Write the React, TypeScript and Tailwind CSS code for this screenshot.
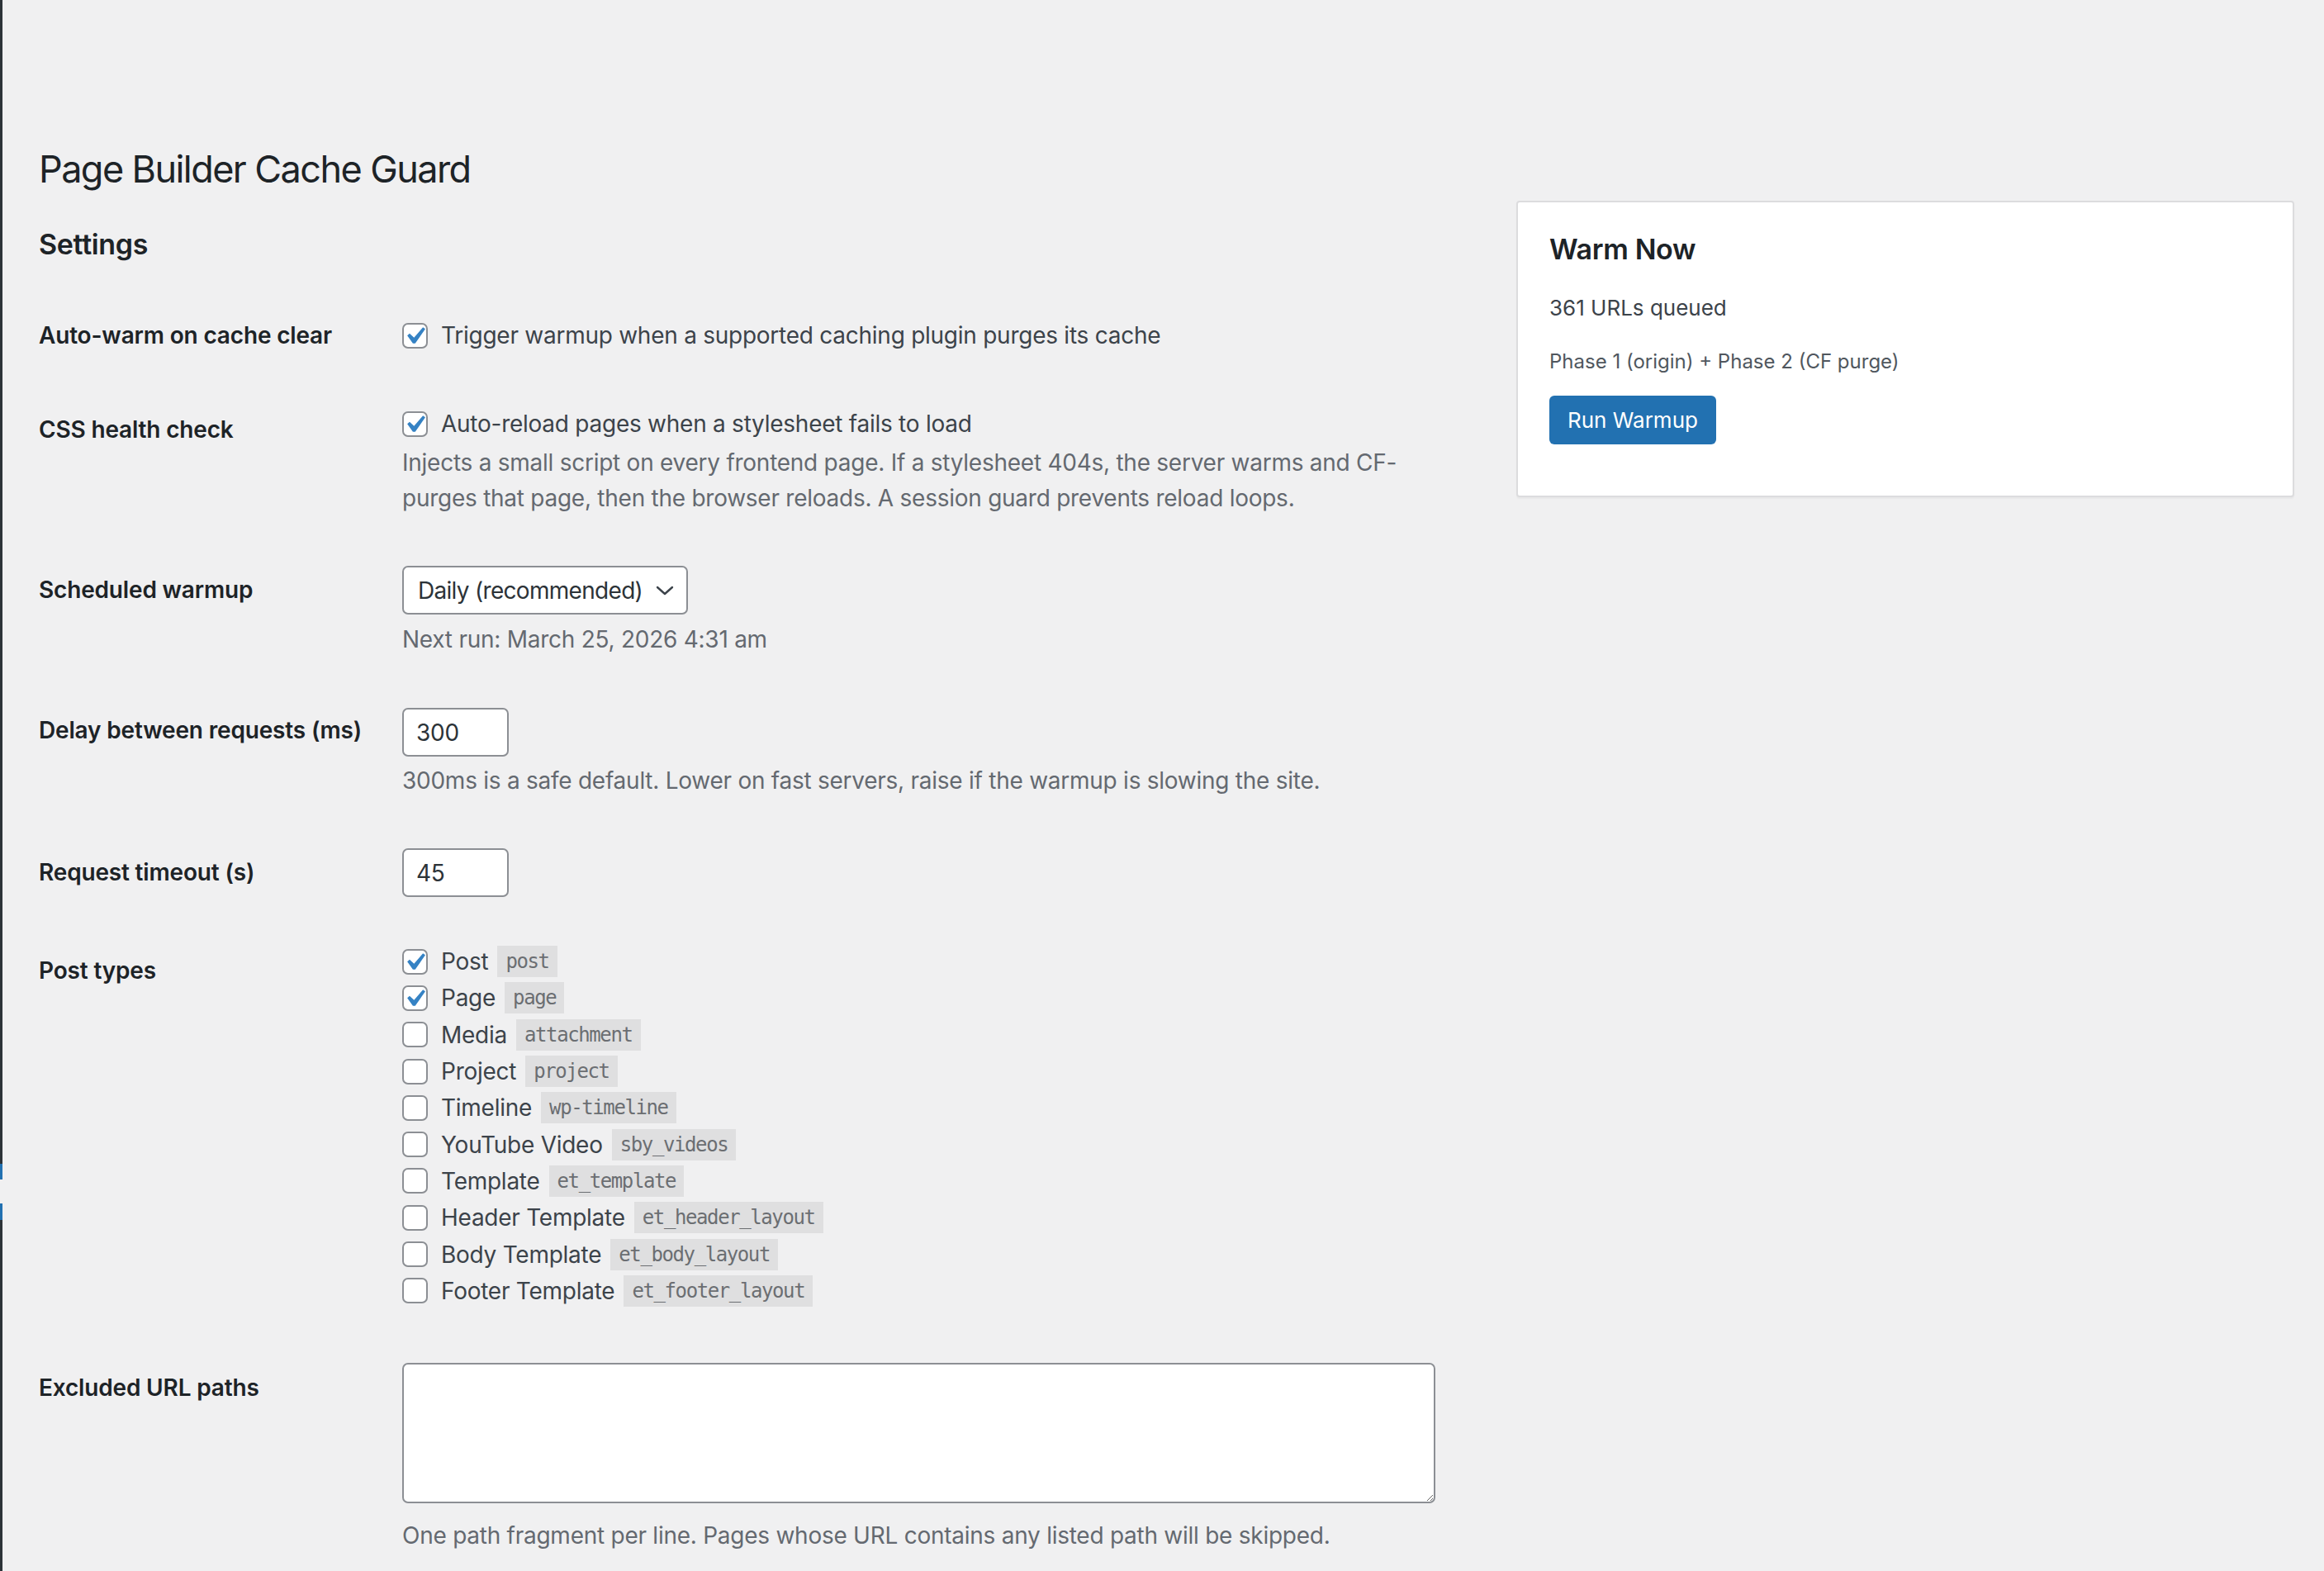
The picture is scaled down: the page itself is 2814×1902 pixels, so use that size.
import { useState } from 'react'

type PostType = {
  label: string
  slug: string
  checked: boolean
}

const postTypes: PostType[] = [
  { label: 'Post', slug: 'post', checked: true },
  { label: 'Page', slug: 'page', checked: true },
  { label: 'Media', slug: 'attachment', checked: false },
  { label: 'Project', slug: 'project', checked: false },
  { label: 'Timeline', slug: 'wp-timeline', checked: false },
  { label: 'YouTube Video', slug: 'sby_videos', checked: false },
  { label: 'Template', slug: 'et_template', checked: false },
  { label: 'Header Template', slug: 'et_header_layout', checked: false },
  { label: 'Body Template', slug: 'et_body_layout', checked: false },
  { label: 'Footer Template', slug: 'et_footer_layout', checked: false },
]

const sans = "font-['Inter','Liberation_Sans',sans-serif]"

function Checkbox({ checked }: { checked: boolean }) {
  return (
    <span className="relative inline-block h-[31px] w-[31px] shrink-0 rounded-[7px] border-2 border-[#8c8f94] bg-white">
      {checked && (
        <svg viewBox="0 0 20 20" className="absolute left-[-8px] top-[-7px] h-[42px] w-[42px]">
          <path d="M14.83 4.89l1.34.94-5.81 8.38H9.02L5.78 9.67l1.34-1.25 2.57 2.4z" fill="#3582c4" />
        </svg>
      )}
    </span>
  )
}

function Label({ children, top }: { children: React.ReactNode; top: number }) {
  return (
    <div style={{ paddingTop: top }} className="text-[28px] font-semibold leading-[36px] tracking-[-0.006em] text-[#1d2327]">
      {children}
    </div>
  )
}

export default function App() {
  const [types, setTypes] = useState(postTypes)
  const [delay, setDelay] = useState('300')
  const [timeout, setTimeoutVal] = useState('45')

  function toggle(i: number) {
    setTypes(types.map((t, j) => (j === i ? { ...t, checked: !t.checked } : t)))
  }

  return (
    <div className={`flex min-h-screen bg-[#f0f0f1] ${sans}`}>
      {/* admin menu edge */}
      <div className="flex w-[3px] shrink-0 flex-col bg-[#2c3338]">
        <div className="h-[1409px]" />
        <div className="h-[19px] bg-[#2271b1]" />
        <div className="h-[29px] bg-[#f0f0f1]" />
        <div className="h-[20px] bg-[#2271b1]" />
      </div>

      <div className="flex-1 pl-[44px] pt-[175px]">
        <h1 className="text-[45px] font-normal leading-[60px] tracking-[-0.035em] text-[#1d2327]">Page Builder Cache Guard</h1>

        <div className="mt-[8px] flex">
          <div className="w-[1789px] tracking-[-0.016em]">
            <h2 className="mt-[31px] mb-[32px] text-[34px] font-semibold leading-[44px] tracking-[-0.01em] text-[#1d2327]">Settings</h2>

            {/* Auto-warm */}
            <div className="grid grid-cols-[440px_1fr]">
              <Label top={38}>Auto-warm on cache clear</Label>
              <div className="pt-[35px] pb-[35px]">
                <label className="flex h-[42px] items-center gap-[16px] text-[28px] text-[#3c434a]">
                  <Checkbox checked />
                  Trigger warmup when a supported caching plugin purges its cache
                </label>
              </div>
            </div>

            {/* CSS health */}
            <div className="grid grid-cols-[440px_1fr]">
              <Label top={40}>CSS health check</Label>
              <div className="pt-[30px] pb-[30px]">
                <label className="flex h-[42px] items-center gap-[16px] text-[28px] text-[#3c434a]">
                  <Checkbox checked />
                  Auto-reload pages when a stylesheet fails to load
                </label>
                <p className="mt-[5px] text-[28px] leading-[43px] text-[#646970]">
                  Injects a small script on every frontend page. If a stylesheet 404s, the server warms and CF-
                  <br />
                  purges that page, then the browser reloads. A session guard prevents reload loops.
                </p>
              </div>
            </div>

            {/* Scheduled */}
            <div className="grid grid-cols-[440px_1fr]">
              <Label top={41}>Scheduled warmup</Label>
              <div className="pt-[30px] pb-[30px]">
                <div className="flex h-[59px] w-[346px] items-center justify-between rounded-[7px] border-2 border-[#8c8f94] bg-white pl-[17px] pr-[14px] text-[28px] tracking-[-0.025em] text-[#2c3338]">
                  <span>Daily (recommended)</span>
                  <svg width="24" height="14" viewBox="0 0 24 14" fill="none">
                    <path d="M3 3l9 8 9-8" stroke="#3c434a" strokeWidth="2.4" strokeLinecap="round" strokeLinejoin="round" />
                  </svg>
                </div>
                <p className="mt-[9px] text-[28px] leading-[42px] text-[#646970]">Next run: March 25, 2026 4:31 am</p>
              </div>
            </div>

            {/* Delay */}
            <div className="grid grid-cols-[440px_1fr]">
              <Label top={41}>Delay between requests (ms)</Label>
              <div className="pt-[32px] pb-[30px]">
                <input
                  value={delay}
                  onChange={(e) => setDelay(e.target.value)}
                  className="block h-[59px] w-[129px] rounded-[7px] border-2 border-[#8c8f94] bg-white px-[15px] text-[28px] text-[#2c3338] outline-none"
                />
                <p className="mt-[8px] text-[28px] leading-[42px] text-[#646970]">
                  300ms is a safe default. Lower on fast servers, raise if the warmup is slowing the site.
                </p>
              </div>
            </div>

            {/* Timeout */}
            <div className="grid grid-cols-[440px_1fr]">
              <Label top={42}>Request timeout (s)</Label>
              <div className="pt-[31px] pb-[30px]">
                <input
                  value={timeout}
                  onChange={(e) => setTimeoutVal(e.target.value)}
                  className="block h-[59px] w-[129px] rounded-[7px] border-2 border-[#8c8f94] bg-white px-[15px] text-[28px] text-[#2c3338] outline-none"
                />
              </div>
            </div>

            {/* Post types */}
            <div className="grid grid-cols-[440px_1fr]">
              <Label top={41}>Post types</Label>
              <div className="pt-[26px] pb-[35px]">
                {types.map((t, i) => (
                  <label
                    key={t.slug}
                    onClick={() => toggle(i)}
                    className="flex h-[44.3px] items-center text-[28px] text-[#3c434a]"
                  >
                    <Checkbox checked={t.checked} />
                    <span className="ml-[16px]">{t.label}</span>
                    <code className="ml-[11px] inline-block bg-[#dfdfe0] px-[10px] pt-[4px] pb-[4px] font-['DejaVu_Sans_Mono',monospace] text-[24px] leading-[30px] tracking-[-1.4px] text-[#6b6e72]">
                      {t.slug}
                    </code>
                  </label>
                ))}
              </div>
            </div>

            {/* Excluded */}
            <div className="grid grid-cols-[440px_1fr]">
              <Label top={42}>Excluded URL paths</Label>
              <div className="pt-[30px] pb-[40px]">
                <textarea className="block h-[170px] w-[1251px] resize rounded-[7px] border-2 border-[#8c8f94] bg-white outline-none" />
                <p className="mt-[18px] text-[28px] leading-[42px] text-[#646970]">
                  One path fragment per line. Pages whose URL contains any listed path will be skipped.
                </p>
              </div>
            </div>
          </div>

          {/* Warm Now card */}
          <div className="ml-auto mr-[36px] h-[359px] w-[942px] shrink-0 rounded-[4px] border-2 border-[#dcdcde] bg-white px-[38px] pt-[35px] shadow-[0_2px_2px_rgba(0,0,0,0.04)]">
            <h2 className="text-[34px] font-semibold leading-[44px] tracking-[-0.01em] text-[#1d2327]">Warm Now</h2>
            <p className="mt-[29px] text-[26px] leading-[40px] text-[#3c434a]">361 URLs queued</p>
            <p className="mt-[27px] text-[24px] leading-[36px] text-[#50575e]">Phase 1 (origin) + Phase 2 (CF purge)</p>
            <button className="mt-[23px] h-[59px] rounded-[6px] bg-[#2271b1] px-[22px] text-[26px] text-white">
              Run Warmup
            </button>
          </div>
        </div>
      </div>
    </div>
  )
}
